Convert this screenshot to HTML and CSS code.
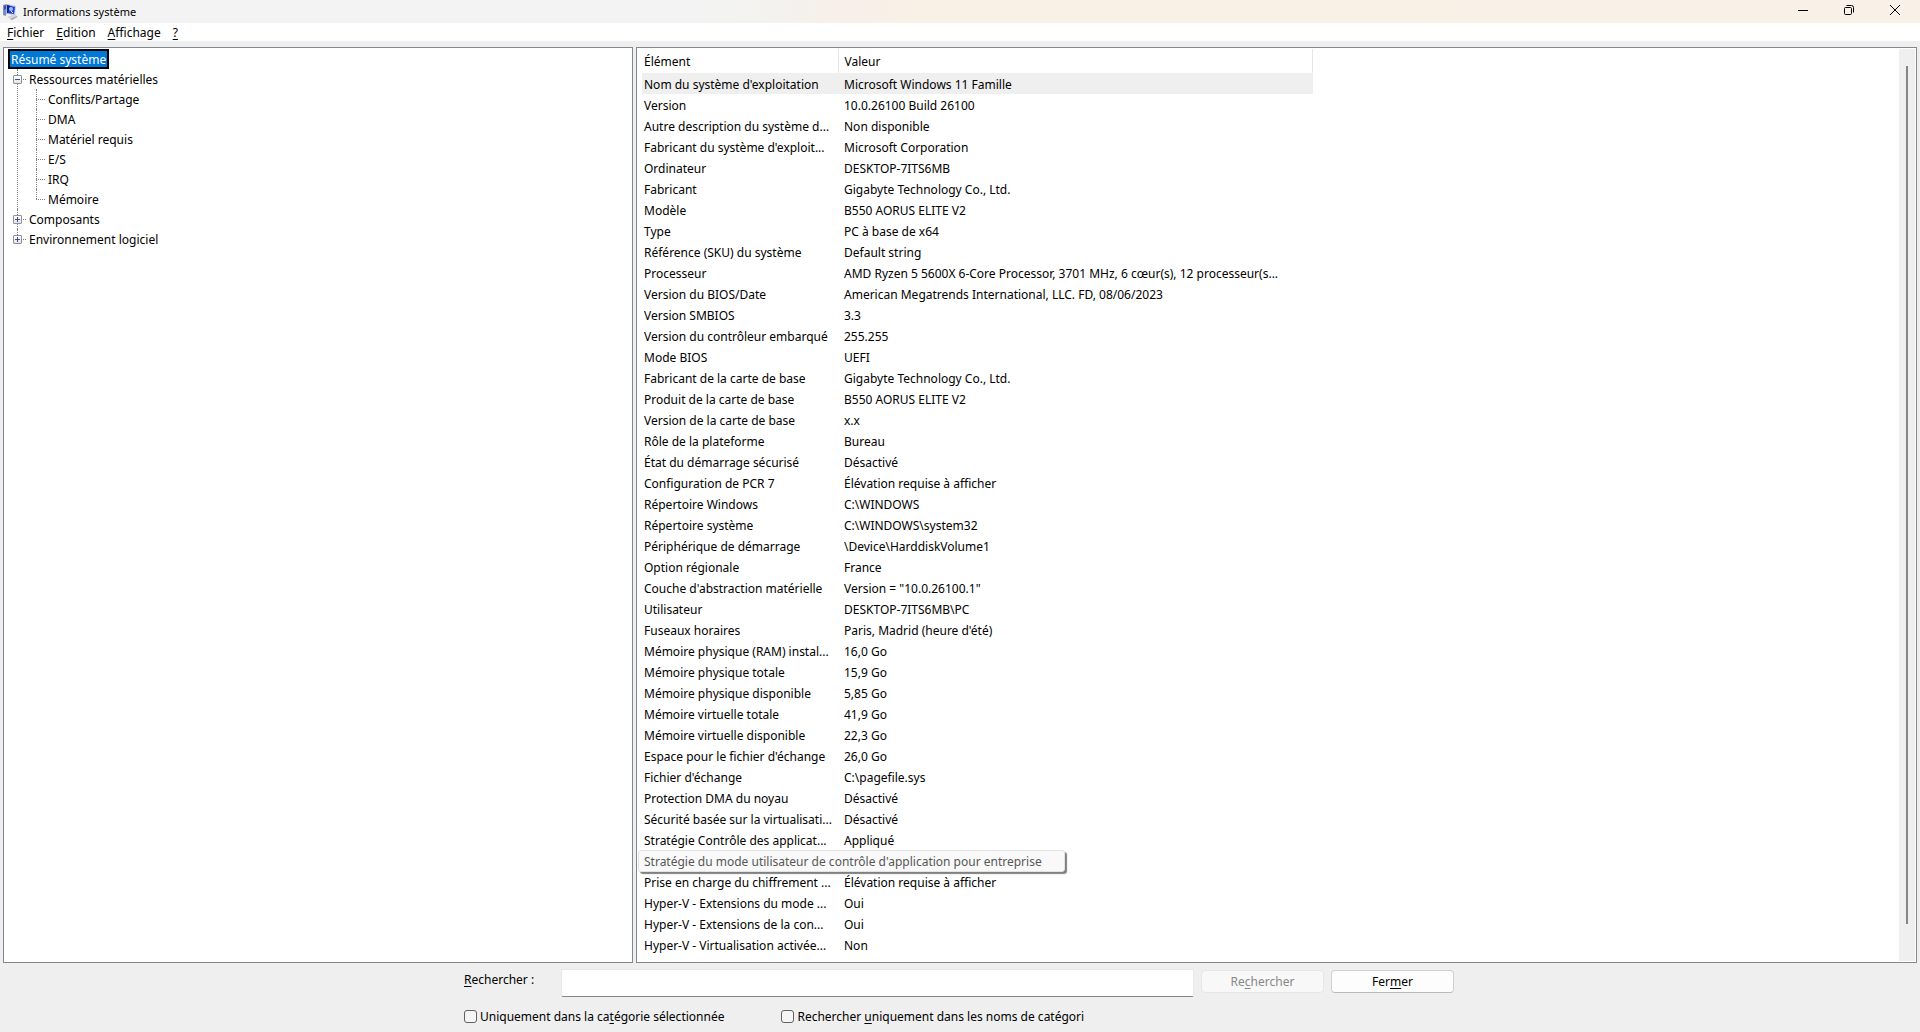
FILE: index.html
```html
<!DOCTYPE html>
<html lang="fr">
<head>
    <meta charset="UTF-8">
    <title>Informations système</title>
    <link rel="stylesheet" href="styles.css">
</head>
<body>
    <header class="titlebar">
        <svg class="app-icon" width="16" height="16" viewBox="0 0 16 16">
            <path d="M5 13l8-3 3 3-6 3z" fill="#d3d5da"/>
            <path d="M8 15l7-3v1l-5 3z" fill="#a5a9b3"/>
            <path d="M5 0l9 2-1 9-9-1z" fill="#b9c6e6"/>
            <path d="M5 1l8 2-1 7-7-1z" fill="#1f3fd0"/>
            <path d="M5 1l3 1-2 7H5z" fill="#0f1f8c"/>
            <path d="M1 1l4-1-1 12-3-1z" fill="#7f8eb8"/>
            <path d="M2 2l2-1v4l-2 1z" fill="#3a53b4"/>
            <circle cx="9" cy="5" r="2" fill="#9dbdff"/>
            <path d="M9 7l2 2" stroke="#dfe9ff"/>
        </svg>
        <h1>Informations système</h1>
        <div class="window-buttons">
            <button type="button" aria-label="Réduire"><svg width="10" height="10" viewBox="0 0 10 10"><path d="M0 5.5h10"/></svg></button>
            <button type="button" aria-label="Restaurer"><svg width="10" height="10" viewBox="0 0 10 10"><rect x=".5" y="2.5" width="7" height="7" rx="1"/><path d="M2.5.5h5a2 2 0 0 1 2 2v5"/></svg></button>
            <button type="button" aria-label="Fermer la fenêtre"><svg width="10" height="10" viewBox="0 0 10 10"><path d="M0 0l10 10M10 0L0 10"/></svg></button>
        </div>
    </header>
    <nav class="menubar">
        <a href="#"><u>F</u>ichier</a>
        <a href="#"><u>E</u>dition</a>
        <a href="#"><u>A</u>ffichage</a>
        <a href="#"><u>?</u></a>
    </nav>

    <main class="panes">
        <section class="pane tree-pane">
            <ul class="tree">
                <li class="root"><a href="#" class="selected">Résumé système</a></li>
                <li class="branch">
                    <button type="button" class="toggle minus" aria-label="Réduire"></button>
                    <a href="#">Ressources matérielles</a>
                    <ul>
                        <li><a href="#">Conflits/Partage</a></li>
                        <li><a href="#">DMA</a></li>
                        <li><a href="#">Matériel requis</a></li>
                        <li><a href="#">E/S</a></li>
                        <li><a href="#">IRQ</a></li>
                        <li><a href="#">Mémoire</a></li>
                    </ul>
                </li>
                <li class="branch">
                    <button type="button" class="toggle plus" aria-label="Développer"></button>
                    <a href="#">Composants</a>
                </li>
                <li class="branch">
                    <button type="button" class="toggle plus" aria-label="Développer"></button>
                    <a href="#">Environnement logiciel</a>
                </li>
            </ul>
        </section>

        <section class="pane detail-pane">
            <div class="list">
                <table>
                    <thead>
                        <tr><th class="col-name">Élément</th><th class="col-value">Valeur</th></tr>
                    </thead>
                    <tbody>
                        <tr class="current"><td>Nom du système d'exploitation</td><td>Microsoft Windows 11 Famille</td></tr>
                        <tr><td>Version</td><td>10.0.26100 Build 26100</td></tr>
                        <tr><td>Autre description du système d...</td><td>Non disponible</td></tr>
                        <tr><td>Fabricant du système d'exploit...</td><td>Microsoft Corporation</td></tr>
                        <tr><td>Ordinateur</td><td>DESKTOP-7ITS6MB</td></tr>
                        <tr><td>Fabricant</td><td>Gigabyte Technology Co., Ltd.</td></tr>
                        <tr><td>Modèle</td><td>B550 AORUS ELITE V2</td></tr>
                        <tr><td>Type</td><td>PC à base de x64</td></tr>
                        <tr><td>Référence (SKU) du système</td><td>Default string</td></tr>
                        <tr><td>Processeur</td><td>AMD Ryzen 5 5600X 6-Core Processor, 3701 MHz, 6 cœur(s), 12 processeur(s...</td></tr>
                        <tr><td>Version du BIOS/Date</td><td>American Megatrends International, LLC. FD, 08/06/2023</td></tr>
                        <tr><td>Version SMBIOS</td><td>3.3</td></tr>
                        <tr><td>Version du contrôleur embarqué</td><td>255.255</td></tr>
                        <tr><td>Mode BIOS</td><td>UEFI</td></tr>
                        <tr><td>Fabricant de la carte de base</td><td>Gigabyte Technology Co., Ltd.</td></tr>
                        <tr><td>Produit de la carte de base</td><td>B550 AORUS ELITE V2</td></tr>
                        <tr><td>Version de la carte de base</td><td>x.x</td></tr>
                        <tr><td>Rôle de la plateforme</td><td>Bureau</td></tr>
                        <tr><td>État du démarrage sécurisé</td><td>Désactivé</td></tr>
                        <tr><td>Configuration de PCR 7</td><td>Élévation requise à afficher</td></tr>
                        <tr><td>Répertoire Windows</td><td>C:\WINDOWS</td></tr>
                        <tr><td>Répertoire système</td><td>C:\WINDOWS\system32</td></tr>
                        <tr><td>Périphérique de démarrage</td><td>\Device\HarddiskVolume1</td></tr>
                        <tr><td>Option régionale</td><td>France</td></tr>
                        <tr><td>Couche d'abstraction matérielle</td><td>Version = "10.0.26100.1"</td></tr>
                        <tr><td>Utilisateur</td><td>DESKTOP-7ITS6MB\PC</td></tr>
                        <tr><td>Fuseaux horaires</td><td>Paris, Madrid (heure d'été)</td></tr>
                        <tr><td>Mémoire physique (RAM) instal...</td><td>16,0 Go</td></tr>
                        <tr><td>Mémoire physique totale</td><td>15,9 Go</td></tr>
                        <tr><td>Mémoire physique disponible</td><td>5,85 Go</td></tr>
                        <tr><td>Mémoire virtuelle totale</td><td>41,9 Go</td></tr>
                        <tr><td>Mémoire virtuelle disponible</td><td>22,3 Go</td></tr>
                        <tr><td>Espace pour le fichier d'échange</td><td>26,0 Go</td></tr>
                        <tr><td>Fichier d'échange</td><td>C:\pagefile.sys</td></tr>
                        <tr><td>Protection DMA du noyau</td><td>Désactivé</td></tr>
                        <tr><td>Sécurité basée sur la virtualisati...</td><td>Désactivé</td></tr>
                        <tr><td>Stratégie Contrôle des applicat...</td><td>Appliqué</td></tr>
                        <tr class="hovered"><td><span class="tooltip">Stratégie du mode utilisateur de contrôle d'application pour entreprise</span></td><td></td></tr>
                        <tr><td>Prise en charge du chiffrement ...</td><td>Élévation requise à afficher</td></tr>
                        <tr><td>Hyper-V - Extensions du mode ...</td><td>Oui</td></tr>
                        <tr><td>Hyper-V - Extensions de la con...</td><td>Oui</td></tr>
                        <tr><td>Hyper-V - Virtualisation activée...</td><td>Non</td></tr>
                    </tbody>
                </table>
            </div>
            <div class="scrollbar"><div class="thumb"></div></div>
        </section>
    </main>

    <form class="search">
        <label class="search-label" for="query"><u>R</u>echercher :</label>
        <input type="text" id="query">
        <button type="button" disabled>Re<u>c</u>hercher</button>
        <button type="button">Fer<u>m</u>er</button>
        <div class="options">
            <label><input type="checkbox"><span>Uniquement dans la ca<u>t</u>égorie sélectionnée</span></label>
            <label><input type="checkbox"><span>Rechercher <u>u</u>niquement dans les noms de catégori</span></label>
        </div>
    </form>
</body>
</html>
```
FILE: styles.css
```css
* {
    box-sizing: border-box;
}

body {
    margin: 0;
    min-height: 100vh;
    display: flex;
    flex-direction: column;
    background: #efefef;
    color: #000;
    font: 12px/20px "Noto Sans", "Open Sans", sans-serif;
}

a {
    color: inherit;
    text-decoration: none;
}

u {
    text-underline-offset: 2px;
}

button, input {
    font: inherit;
    color: inherit;
}

/* barre de titre */
.titlebar {
    display: flex;
    align-items: center;
    height: 23px;
    padding-left: 2px;
    background: linear-gradient(90deg, #f3f3f3 0%, #f3f3f3 36%, #f3f2ee 41%, #f8efea 44%, #f9f0e6 48%, #f9f1e7 100%);
}

.titlebar h1 {
    margin: 0 0 0 5px;
    font-size: 11px;
    font-weight: normal;
}

.window-buttons {
    display: flex;
    align-self: flex-start;
    margin-left: auto;
    padding-right: 2px;
}

.window-buttons button {
    display: flex;
    align-items: center;
    justify-content: center;
    width: 46px;
    height: 20px;
    padding: 0;
    border: none;
    background: none;
}

.window-buttons svg {
    fill: none;
    stroke: #000;
}

.menubar {
    display: flex;
    gap: 12px;
    height: 18px;
    padding-left: 7px;
    line-height: 20px;
    background: #fff;
}

/* panneaux */
.panes {
    flex: 1;
    display: flex;
    gap: 3px;
    padding: 6px 3px 0;
}

.pane {
    border: 1px solid #828790;
    background: #fff;
}

.tree-pane {
    width: 630px;
    padding: 1px 4px;
}

.detail-pane {
    flex: 1;
    display: flex;
    justify-content: space-between;
    padding: 1px;
}

/* arborescence */
.tree, .tree ul {
    margin: 0;
    padding: 0;
    list-style: none;
}

.tree a {
    display: block;
    width: fit-content;
    height: 20px;
    padding: 0 2px;
    line-height: 22px;
}

.tree .selected {
    border: 2px solid #000;
    padding: 0 1px;
    line-height: 18px;
    background: #0078d7;
    color: #fff;
}

.tree li {
    position: relative;
}

.branch {
    padding-left: 19px;
}

.branch::before, .branch li::before {
    content: "";
    position: absolute;
    left: 9px;
    top: 0;
    bottom: 0;
    border-left: 1px dotted #808080;
}

.branch:last-child::before, .branch li:last-child::before {
    bottom: auto;
    height: 10px;
}

.branch::after, .branch li::after {
    content: "";
    position: absolute;
    left: 9px;
    top: 10px;
    width: 9px;
    border-top: 1px dotted #808080;
}

.branch li {
    padding-left: 19px;
}

.toggle {
    position: absolute;
    z-index: 1;
    left: 5px;
    top: 6px;
    width: 9px;
    height: 9px;
    padding: 0;
    border: 1px solid #919191;
    border-radius: 1px;
    background: linear-gradient(#fff, #e4e4e4);
}

.toggle::before, .plus::after {
    content: "";
    position: absolute;
    left: 1px;
    top: 3px;
    width: 5px;
    height: 1px;
    background: #3c4f9b;
}

.plus::after {
    left: 3px;
    top: 1px;
    width: 1px;
    height: 5px;
}

/* liste des valeurs */
.list {
    padding-left: 4px;
}

table {
    width: 671px;
    table-layout: fixed;
    border-collapse: collapse;
}

th, td {
    height: 21px;
    padding: 2px 0 0 2px;
    line-height: 19px;
    text-align: left;
    font-weight: normal;
    white-space: nowrap;
}

th {
    height: 24px;
    padding-top: 0;
    border-right: 1px solid #e5e5e5;
}

.col-name {
    width: 196px;
}

.col-value, td + td {
    padding-left: 6px;
}

.current {
    background: #efefef;
}

.hovered {
    position: relative;
}

.tooltip {
    position: absolute;
    left: -4px;
    top: 0;
    min-width: 427px;
    height: 22px;
    padding: 0 6px 0 5px;
    border: 1px solid #e3e3e3;
    border-radius: 3px;
    line-height: 22px;
    background: #f9f9f9;
    color: #575757;
    box-shadow: 2px 2px 1px #808080;
}

.scrollbar {
    width: 16px;
    padding: 17px 5px 37px 7px;
    background: #efefef;
    display: flex;
}

.thumb {
    width: 2px;
    background: #858585;
}

/* recherche */
.search {
    display: grid;
    grid-template-columns: 90px 633px 123px 123px;
    column-gap: 7px;
    justify-content: center;
    align-items: start;
    height: 69px;
    padding: 6px 2px 0 0;
}

.search-label {
    line-height: 22px;
}

.search input[type="text"] {
    height: 28px;
    border: 1px solid #e8e8e8;
    border-bottom: 1px solid #858585;
    border-radius: 2px;
    background: #fff;
}

.search button {
    height: 23px;
    margin-top: 1px;
    padding: 0;
    border: 1px solid #d0d0d0;
    border-bottom-color: #bababa;
    border-radius: 4px;
    background: #fdfdfd;
    line-height: 21px;
}

.search button:disabled {
    border-color: #e6e6e6;
    background: #f8f8f8;
    color: #888;
}

.options {
    grid-column: 1 / -1;
    display: flex;
    gap: 57px;
    padding-top: 4px;
}

.options label {
    display: flex;
    align-items: center;
    gap: 3px;
}

.options input {
    appearance: none;
    width: 13px;
    height: 13px;
    margin: 0;
    border: 1px solid #626262;
    border-radius: 3px;
    background: #f5f5f5;
}
```
